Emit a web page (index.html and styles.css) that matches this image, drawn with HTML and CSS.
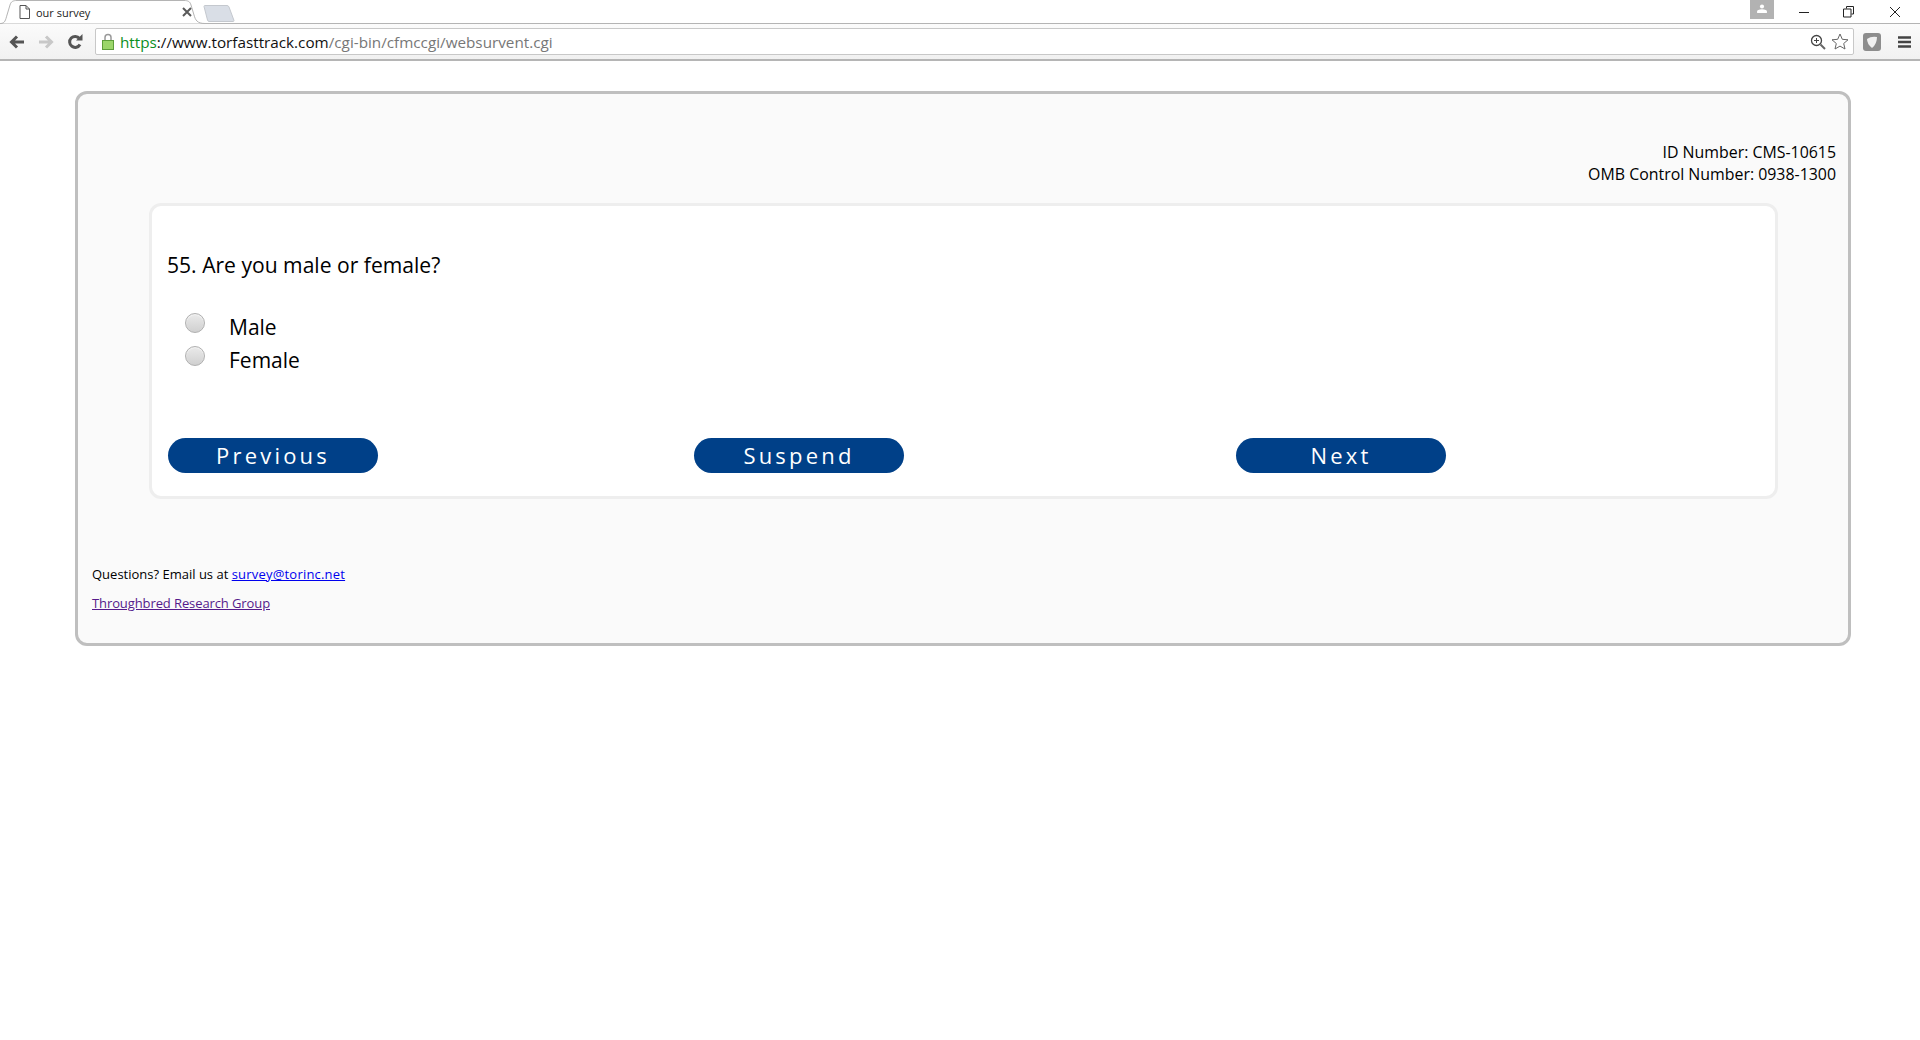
FILE: index.html
```html
<!DOCTYPE html>
<html lang="en">
<head>
<meta charset="utf-8">
<title>our survey</title>
<link rel="stylesheet" href="styles.css">
</head>
<body>
<header class="browser">
  <div class="tabstrip">
    <div class="tab">
      <svg class="tab-shape" width="206" height="24" viewBox="0 0 206 24"><path d="M0.5 23.5C5 23.5 5.500 20 7 15L10 5C11 1.500 13 .5 17 .5H184C188 .5 190 1.500 191 5L194 15C195.500 20 197 23.500 205 23.500" fill="#fff" stroke="#b4b4b4"/></svg>
      <svg class="page-icon" width="11" height="14" viewBox="0 0 11 14"><path d="M1 .5H7L10.500 4V13.500H1ZM7 .5V4H10.500" fill="#fff" stroke="#555" stroke-width="1"/></svg>
      <span class="tab-title">our survey</span>
      <svg class="tab-close" width="10" height="10" viewBox="0 0 10 10"><path d="M1 1L9 9M9 1L1 9" stroke="#5a5a5a" stroke-width="2"/></svg>
    </div>
    <svg class="newtab" width="32" height="17" viewBox="0 0 32 17"><path d="M1 1.500Q1 .5 2 .5H24Q25.500 .5 26 2L31 15.500Q31 16.500 30 16.500H6Q5 16.500 4.500 15Z" fill="#d9dee6" stroke="#c4c8ce"/></svg>
    <div class="winctl">
      <div class="profile"><svg width="10" height="9" viewBox="0 0 12 11"><circle cx="6" cy="3" r="2.500" fill="#fff"/><path d="M0 11V9Q0 7 6 6.500Q12 7 12 9V11Z" fill="#fff"/></svg></div>
      <svg class="win-min" width="12" height="12" viewBox="0 0 12 12"><path d="M1 6.500H11" stroke="#222"/></svg>
      <svg class="win-max" width="12" height="12" viewBox="0 0 12 12"><path d="M3.500 2.500V.5H10.500V8H8.500M.5 3H8V11H.5Z" fill="none" stroke="#222"/></svg>
      <svg class="win-close" width="12" height="12" viewBox="0 0 12 12"><path d="M1 1L11 11M11 1L1 11" stroke="#222"/></svg>
    </div>
  </div>
  <div class="toolbar">
    <svg class="nav nav-back" width="16" height="14" viewBox="0 0 16 14"><path d="M15 7H3M8 1.500L2.500 7L8 12.500" fill="none" stroke="#555" stroke-width="3"/></svg>
    <svg class="nav nav-fwd" width="16" height="14" viewBox="0 0 16 14"><path d="M1 7H13M8 1.500L13.500 7L8 12.500" fill="none" stroke="#c8c8c8" stroke-width="3"/></svg>
    <svg class="nav nav-reload" width="16" height="16" viewBox="0 0 16 16"><path d="M13 10.500A5.500 5.500 0 1 1 12.500 4.500" fill="none" stroke="#555" stroke-width="3"/><path d="M9 6.500H15.500V0Z" fill="#555"/></svg>
    <div class="omnibox">
      <svg class="lock" width="12" height="17" viewBox="0 0 12 17"><path d="M3 8V4.500A3 3 0 0 1 9 4.500V8" fill="none" stroke="#999" stroke-width="1.500"/><rect x=".5" y="7.500" width="11" height="9" fill="#9bd66a" stroke="#5d9e3a"/></svg>
      <div class="url"><span class="url-scheme">https</span>://www.torfasttrack.com<span class="url-path">/cgi-bin/cfmccgi/websurvent.cgi</span></div>
      <svg class="zoom-icon" width="16" height="16" viewBox="0 0 16 16"><circle cx="6.500" cy="6.500" r="5" fill="#fff" stroke="#444" stroke-width="1.300"/><path d="M6.500 4V9M4 6.500H9" stroke="#444"/><path d="M10.500 10.500L15 15" stroke="#666" stroke-width="2"/></svg>
      <svg class="star" width="18" height="17" viewBox="0 0 18 17"><path d="M9 1L11.300 6.300L17 6.800L12.700 10.500L14 16L9 13.100L4 16L5.300 10.500L1 6.800L6.700 6.300Z" fill="#fff" stroke="#666"/></svg>
    </div>
    <div class="ext"><svg width="18" height="18" viewBox="0 0 18 18"><rect width="18" height="18" rx="3" fill="#8d8d8d"/><path d="M4 6Q8 3 14 4Q14 11 9 15Q4 11 4 6Z" fill="#f0f0f0"/></svg></div>
    <svg class="menu" width="13" height="12" viewBox="0 0 13 12"><path d="M0 1.500H13M0 6H13M0 10.500H13" stroke="#444" stroke-width="2.400"/></svg>
  </div>
</header>
<main class="survey">
  <div class="meta">
    <div>ID Number: CMS-10615</div>
    <div>OMB Control Number: 0938-1300</div>
  </div>
  <section class="card">
    <h1 class="question">55. Are you male or female?</h1>
    <div class="options">
      <label class="option"><span class="radio"></span><span class="opt-text">Male</span></label>
      <label class="option"><span class="radio"></span><span class="opt-text">Female</span></label>
    </div>
    <div class="actions">
      <button class="btn">Previous</button>
      <button class="btn btn-suspend">Suspend</button>
      <button class="btn btn-next">Next</button>
    </div>
  </section>
  <footer class="foot">
    <p class="foot-line">Questions? Email us at <a class="mail" href="#">survey@torinc.net</a></p>
    <p class="foot-line"><a class="visited" href="#">Throughbred Research Group</a></p>
  </footer>
</main>
</body>
</html>
```
FILE: styles.css
```css
* { box-sizing: border-box; }
html, body { margin: 0; padding: 0; background: #fff; }
body { font-family: "Open Sans", "Liberation Sans", sans-serif; color: #000; height: 1040px; overflow: hidden; }
.browser { height: 61px; font-family: "Open Sans", "Liberation Sans", sans-serif; }
.tabstrip { height: 24px; display: flex; background: linear-gradient(#fff, #fff 23px, #b4b4b4 23px); }
.tab { position: relative; width: 206px; height: 24px; flex: none; display: flex; align-items: center; }
.tab-shape { position: absolute; left: 0; top: 0; }
.page-icon { position: relative; margin-left: 19px; flex: none; }
.tab-title { position: relative; margin-left: 6px; font-size: 11px; color: #222; width: 146px; }
.tab-close { position: relative; flex: none; }
.newtab { flex: none; margin: 5px 0 0 -3px; }
.winctl { margin-left: auto; display: flex; align-items: flex-start; height: 23px; }
.profile { width: 24px; height: 19px; background: #b2b2b2; display: flex; align-items: center; justify-content: center; margin-right: 24px; padding-bottom: 3px; }
.win-min { margin: 6px 33px 0 0; }
.win-max { margin: 6px 34px 0 0; }
.win-close { margin: 6px 19px 0 0; }
.toolbar { height: 37px; display: flex; align-items: center; background: linear-gradient(#fbfbfb, #f1f1f1); border-bottom: 2px solid #b5b5b5; }
.nav { flex: none; }
.nav-back { margin-left: 9px; }
.nav-fwd { margin-left: 13px; }
.nav-reload { margin-left: 13px; }
.omnibox { margin-left: 12px; width: 1759px; height: 27px; background: #fff; border: 1px solid #c8c8c8; border-radius: 2px; display: flex; align-items: center; padding-left: 6px; flex: none; }
.lock { flex: none; }
.url { margin-left: 6px; font-size: 15.25px; color: #111; flex: 1; white-space: nowrap; }
.url-scheme { color: #0a8f1e; }
.url-path { color: #777; }
.zoom-icon { flex: none; margin-right: 5px; }
.star { flex: none; margin-right: 4px; }
.ext { margin-left: 9px; width: 18px; height: 18px; flex: none; line-height: 0; }
.menu { margin-left: 17px; flex: none; }
.survey { margin: 30px 69px 0 75px; height: 555px; background: #fafafa; border: 3px solid #bfbfbf; border-radius: 12px; padding: 47px 12px 0 0; }
.meta { text-align: right; font-size: 15.9px; line-height: 22px; height: 62px; }
.card { margin-left: 71px; width: 1629px; height: 296px; background: #fff; border: 3px solid #eee; border-radius: 12px; padding: 0 0 0 15px; }
.question { margin: 0; padding-top: 44px; font-size: 21.1px; line-height: 30px; font-weight: 400; }
.options { margin-top: 33px; padding-left: 18px; }
.option { display: flex; align-items: flex-start; height: 33px; font-size: 21px; line-height: 28px; }
.opt-text { margin-left: -1px; }
.radio { width: 20px; height: 20px; border-radius: 50%; background: linear-gradient(#eaeaea, #d0d0d0); border: 1px solid #b0b0b0; margin-right: 25px; flex: none; box-shadow: inset 0 1px 1px #f4f4f4; }
.actions { display: flex; margin-top: 59px; padding-left: 1px; }
.btn { width: 210px; height: 35px; background: #004088; color: #fff; border: 0; border-radius: 18px; font-family: inherit; font-size: 22px; line-height: 35px; letter-spacing: 3.2px; padding: 0; font-weight: 400; }
.btn-suspend { margin-left: 316px; }
.btn-next { margin-left: 332px; }
.foot { margin-top: 66px; padding-left: 14px; font-size: 13px; }
.foot-line { margin: 0 0 11px; line-height: 18px; }
.mail { color: #0000ee; letter-spacing: 0.2px; }
.visited { color: #551a8b; letter-spacing: -0.1px; }
```
